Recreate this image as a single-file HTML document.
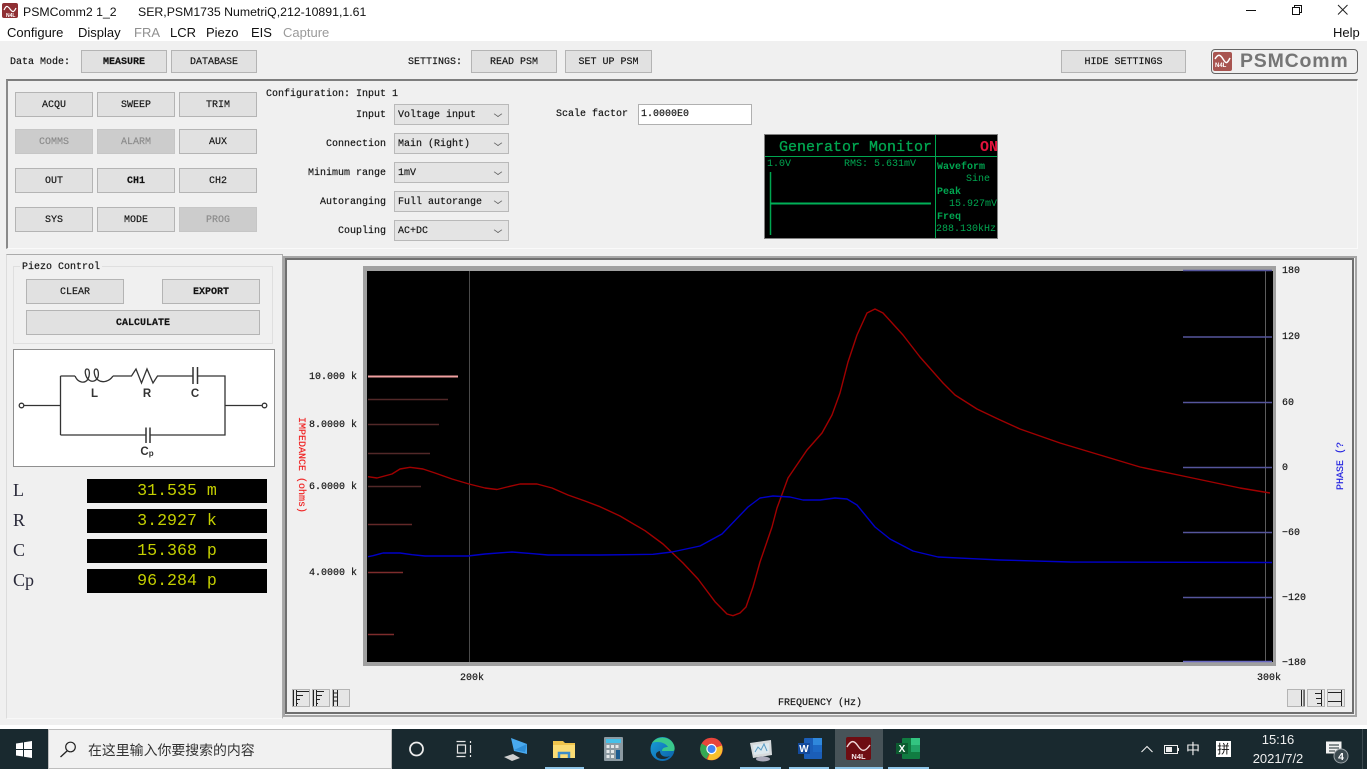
<!DOCTYPE html>
<html lang="zh"><head><meta charset="utf-8"><title>PSMComm2 1_2</title>
<style>
html,body{margin:0;padding:0;width:1367px;height:769px;overflow:hidden;background:#fff}
#p{position:relative;width:1367px;height:769px;overflow:hidden;font-family:"Liberation Mono",monospace;font-size:10px;color:#111}
.a{position:absolute}
.t{position:absolute;white-space:nowrap;line-height:12px;height:12px;margin-top:2px;-webkit-text-stroke:.15px #111}
.s{position:absolute;white-space:nowrap;font-family:"Liberation Sans","Noto Sans CJK SC",sans-serif;font-size:12.3px;line-height:16px;color:#111;margin-top:1px}
.m{font-size:13px}
.b{position:absolute;box-sizing:border-box;background:#e1e1e1;border:1px solid #b4b4b4;display:flex;align-items:center;justify-content:center;font-size:10px;color:#111;white-space:nowrap;padding-top:2px;-webkit-text-stroke:.15px currentColor}
.d{background:#ccc;color:#8a8a8a;border-color:#c6c6c6}
.w{font-weight:bold}
.sel{position:absolute;box-sizing:border-box;left:394px;width:115px;height:21px;background:#e4e4e4;border:1px solid #b9b9b9;font-size:10px;line-height:21px;padding-left:3px;white-space:nowrap;-webkit-text-stroke:.15px #111}
.sel:after{content:"";position:absolute;right:7px;top:6px;width:5px;height:5px;border-right:1px solid #666;border-bottom:1px solid #666;transform:scale(1,.7) rotate(45deg)}
.r{position:absolute;right:981px;white-space:nowrap;line-height:12px;margin-top:2px;-webkit-text-stroke:.15px #111}
.rd{position:absolute;left:87px;width:180px;height:24px;background:#000;color:#c4cf00;font-size:16.6px;line-height:24px;text-align:center;white-space:pre}
.lb{position:absolute;left:13px;font-family:"Liberation Serif",serif;font-size:18px;line-height:22px;color:#2a2a3a}
.g{position:absolute;color:#00a650;white-space:nowrap;line-height:12px;font-size:10px;margin-top:2px}
.yl{position:absolute;width:50px;text-align:right;left:307px;white-space:pre;line-height:12px;font-size:10px;margin-top:2px;-webkit-text-stroke:.15px #111}
.ph{position:absolute;left:1282px;white-space:nowrap;line-height:12px;font-size:10px;margin-top:2px;-webkit-text-stroke:.15px #111}
svg{position:absolute;left:0;top:0}
</style></head><body><div id="p">

<!-- window chrome -->
<div class="a" style="left:0;top:41px;width:1367px;height:684px;background:#f0f0f0"></div>
<div class="a" style="left:2px;top:3px;width:16px;height:15px;background:#8f2f33;border-radius:2px"></div>
<div class="s" style="left:23px;top:3px">PSMComm2 1_2</div>
<div class="s" style="left:138px;top:3px">SER,PSM1735 NumetriQ,212-10891,1.61</div>
<div class="s m" style="left:7px;top:24px">Configure</div>
<div class="s m" style="left:78px;top:24px">Display</div>
<div class="s m" style="left:134px;top:24px;color:#8f8f8f">FRA</div>
<div class="s m" style="left:170px;top:24px">LCR</div>
<div class="s m" style="left:206px;top:24px">Piezo</div>
<div class="s m" style="left:251px;top:24px">EIS</div>
<div class="s m" style="left:283px;top:24px;color:#9a9a9a">Capture</div>
<div class="s m" style="left:1333px;top:24px">Help</div>

<!-- top row -->
<div class="t" style="left:10px;top:55px">Data Mode:</div>
<div class="b w" style="left:81px;top:50px;width:86px;height:23px">MEASURE</div>
<div class="b" style="left:171px;top:50px;width:86px;height:23px">DATABASE</div>
<div class="t" style="left:408px;top:55px">SETTINGS:</div>
<div class="b" style="left:471px;top:50px;width:86px;height:23px">READ PSM</div>
<div class="b" style="left:565px;top:50px;width:87px;height:23px">SET UP PSM</div>
<div class="b" style="left:1061px;top:50px;width:125px;height:23px">HIDE SETTINGS</div>
<div class="a" style="left:1211px;top:49px;width:145px;height:23px;border:1px solid #666;border-radius:4px"></div>
<div class="a" style="left:1213px;top:52px;width:19px;height:19px;background:#a85450;border-radius:2px"></div>
<div class="a" style="left:1240px;top:49px;font:bold 19.5px/25px 'Liberation Sans',sans-serif;color:#757575;letter-spacing:.8px;white-space:nowrap">PSMComm</div>
<div class="a" style="left:1215px;top:63px;font:bold 6px/7px 'Liberation Sans',sans-serif;color:#fff">N4L</div>

<!-- settings panel -->
<div class="a" style="box-sizing:border-box;left:6px;top:79px;width:1352px;height:170px;border-top:2px solid #7d7d7d;border-left:2px solid #8a8a8a;border-right:1px solid #fafafa;border-bottom:1px solid #fafafa"></div>
<div class="b" style="left:15px;top:92px;width:78px;height:25px">ACQU</div>
<div class="b" style="left:97px;top:92px;width:78px;height:25px">SWEEP</div>
<div class="b" style="left:179px;top:92px;width:78px;height:25px">TRIM</div>
<div class="b d" style="left:15px;top:129px;width:78px;height:25px">COMMS</div>
<div class="b d" style="left:97px;top:129px;width:78px;height:25px">ALARM</div>
<div class="b" style="left:179px;top:129px;width:78px;height:25px">AUX</div>
<div class="b" style="left:15px;top:168px;width:78px;height:25px">OUT</div>
<div class="b w" style="left:97px;top:168px;width:78px;height:25px">CH1</div>
<div class="b" style="left:179px;top:168px;width:78px;height:25px">CH2</div>
<div class="b" style="left:15px;top:207px;width:78px;height:25px">SYS</div>
<div class="b" style="left:97px;top:207px;width:78px;height:25px">MODE</div>
<div class="b d" style="left:179px;top:207px;width:78px;height:25px">PROG</div>

<div class="t" style="left:266px;top:87px">Configuration: Input 1</div>
<div class="r" style="top:108px">Input</div>
<div class="r" style="top:137px">Connection</div>
<div class="r" style="top:166px">Minimum range</div>
<div class="r" style="top:195px">Autoranging</div>
<div class="r" style="top:224px">Coupling</div>
<div class="sel" style="top:104px">Voltage input</div>
<div class="sel" style="top:133px">Main (Right)</div>
<div class="sel" style="top:162px">1mV</div>
<div class="sel" style="top:191px">Full autorange</div>
<div class="sel" style="top:220px">AC+DC</div>
<div class="t" style="left:556px;top:107px">Scale factor</div>
<div class="a" style="box-sizing:border-box;left:638px;top:104px;width:114px;height:21px;background:#fff;border:1px solid #b0b0b0;line-height:20px;padding-left:2px;-webkit-text-stroke:.15px #111">1.0000E0</div>

<!-- generator monitor -->
<div class="a" style="box-sizing:border-box;left:764px;top:134px;width:234px;height:105px;background:#000;border:1px solid #808080"></div>
<div class="g" style="left:779px;top:139px;font-size:15px;line-height:14px;-webkit-text-stroke:.3px #00a650">Generator Monitor</div>
<div class="g" style="left:980px;top:139px;font-size:15px;line-height:14px;color:#e2123c;font-weight:bold">ON</div>
<div class="g" style="left:767px;top:157px">1.0V</div>
<div class="g" style="left:844px;top:157px">RMS: 5.631mV</div>
<div class="g" style="left:937px;top:160px;font-weight:bold">Waveform</div>
<div class="g" style="left:966px;top:172px">Sine</div>
<div class="g" style="left:937px;top:185px;font-weight:bold">Peak</div>
<div class="g" style="left:949px;top:197px">15.927mV</div>
<div class="g" style="left:937px;top:210px;font-weight:bold">Freq</div>
<div class="g" style="left:936px;top:222px">288.130kHz</div>

<!-- left panel -->
<div class="a" style="box-sizing:border-box;left:6px;top:254px;width:277px;height:465px;border-top:1px solid #ababab;border-left:1px solid #dcdcdc;border-right:1px solid #ababab;border-bottom:1px solid #f8f8f8"></div>
<div class="a" style="box-sizing:border-box;left:13px;top:266px;width:260px;height:78px;border:1px solid #dfdfdf"></div>
<div class="t" style="left:20px;top:260px;background:#f0f0f0;padding:0 2px">Piezo Control</div>
<div class="b" style="left:26px;top:279px;width:98px;height:25px">CLEAR</div>
<div class="b w" style="left:162px;top:279px;width:98px;height:25px">EXPORT</div>
<div class="b w" style="left:26px;top:310px;width:234px;height:25px">CALCULATE</div>
<div class="a" style="box-sizing:border-box;left:13px;top:349px;width:262px;height:118px;background:#fff;border:1px solid #8f8f8f"></div>
<div class="lb" style="top:479px">L</div>
<div class="lb" style="top:509px">R</div>
<div class="lb" style="top:539px">C</div>
<div class="lb" style="top:569px">Cp</div>
<div class="rd" style="top:479px">31.535 m</div>
<div class="rd" style="top:509px">3.2927 k</div>
<div class="rd" style="top:539px">15.368 p</div>
<div class="rd" style="top:569px">96.284 p</div>

<!-- chart panel -->
<div class="a" style="box-sizing:border-box;left:283px;top:256px;width:1074px;height:461px;border:2px solid #a6a6a6"></div>
<div class="a" style="box-sizing:border-box;left:285px;top:258px;width:1069px;height:456px;border:2px solid #6f6f6f"></div>
<div class="a" style="box-sizing:border-box;left:363px;top:266px;width:913px;height:400px;background:#000;border:4px solid #a0a0a0;border-top-width:5px;border-left-width:4px;border-right-width:3px"></div>
<div class="yl" style="top:370px">10.000 k</div>
<div class="yl" style="top:418px">8.0000 k</div>
<div class="yl" style="top:480px">6.0000 k</div>
<div class="yl" style="top:566px">4.0000 k</div>
<div class="ph" style="top:264px">180</div>
<div class="ph" style="top:330px">120</div>
<div class="ph" style="top:396px">60</div>
<div class="ph" style="top:461px">0</div>
<div class="ph" style="top:526px">−60</div>
<div class="ph" style="top:591px">−120</div>
<div class="ph" style="top:656px">−180</div>
<div class="t" style="left:460px;top:671px">200k</div>
<div class="t" style="left:1257px;top:671px">300k</div>
<div class="t" style="left:778px;top:696px">FREQUENCY (Hz)</div>
<div class="t" style="left:294px;top:415px;writing-mode:vertical-rl;height:auto;width:12px;color:#f02020;-webkit-text-stroke:.15px #f02020">IMPEDANCE (ohms)</div>

<svg width="1367" height="769" viewBox="0 0 1367 769">
<!-- logo wave -->
<path d="M1215 59c3-5 5-5 8 0s4 5 7-1" fill="none" stroke="#fff" stroke-width="1.5"/>
<path d="M4 10c2-4 3-5 6-1s4 3 6-1" fill="none" stroke="#fff" stroke-width="1.2"/>
<text x="6" y="17" font-family="Liberation Sans" font-size="5" font-weight="bold" fill="#fff">N4L</text>
<!-- window controls -->
<path d="M1246 10.500h10" stroke="#111" fill="none"/>
<path d="M1292.500 7.500h7v7h-7zM1294.500 7.500v-2h7v7h-2" stroke="#111" fill="none"/>
<path d="M1338 5l9.500 9.500M1347.500 5L1338 14.500" stroke="#222" fill="none"/>
<!-- monitor lines -->
<path d="M765 156.500H997M935.500 135V238" stroke="#00a650" fill="none"/>
<path d="M770.500 172V235" stroke="#00a650" stroke-width="1.500" fill="none"/>
<path d="M770 203.500H931" stroke="#00b058" stroke-width="2" fill="none"/>
<!-- circuit -->
<g fill="none" stroke="#333" stroke-width="1.300">
<circle cx="21.500" cy="405.500" r="2.300"/><circle cx="264.500" cy="405.500" r="2.300"/>
<path d="M24 405.500H60.500M60.500 376V435M60.500 376H75M113 376H131.500L136 369L141.500 383L147 369L153 383L157.500 376H192.500M197.500 376H225V435H150M145.500 435H60.500M225 405.500H262"/>
<path d="M75 376c3 7 10 8 13 3c2-4 2-10-1-10c-3 0-2 8 2 11c4 3 8 0 9-3c1-4 0-8-2-8c-3 0-2 8 2 11c4 3 11 2 15-4"/>
<path d="M193 367V384M197.500 367V384M146 427.500V443M150 427.500V443" stroke-width="1.500"/>
</g>
<g font-family="Liberation Sans" font-weight="bold" font-size="11.500" fill="#333" text-anchor="middle">
<text x="94.500" y="397">L</text><text x="147" y="397">R</text><text x="195" y="397">C</text>
<text x="147" y="455">C<tspan font-size="8" dy="1">p</tspan></text></g>
<!-- grid -->
<path d="M469.500 271V662" stroke="#4a4a4a" fill="none"/>
<path d="M1265.500 271V662" stroke="#5c5c5c" fill="none"/>
<g stroke-width="1.500" fill="none">
<path d="M368 399.500H448M368 424.500H439M368 453.500H430M368 486.500H421" stroke="#522828"/>
<path d="M368 524.500H412" stroke="#632828"/>
<path d="M368 572.500H403M368 634.500H394" stroke="#7d2c2c"/>
<path d="M1183 270.500H1272M1183 337H1272M1183 402.500H1272M1183 467.500H1272M1183 532.500H1272M1183 597.500H1272" stroke="#55559c"/>
<path d="M1183 661.500H1272" stroke="#6a6ac4"/>
</g>
<path d="M368 376.500H458" stroke="#f0a0a0" stroke-width="2" fill="none"/>
<!-- curves -->
<polyline fill="none" stroke="#a00000" stroke-width="1.400" stroke-linejoin="round" points="368,476.700 377,478 392,474 400,469 410,467.300 423,469 435,473 452,479 469,484 485,488 497,489.500 507,487 520,484 537,484 552,488 568,495 585,501 600,506.700 620,516 645,530.700 663,544 683,563 698,579 715,601.700 727,614 733,615.700 740,613 746,607 753,587 760,562 772,527 777,508 788,478 807,450 822,433 832,415 840,393 848,362 857,335 867,313 875,309 883,313 903,335 920,357 943,383 955,395 977,409 998,419 1020,429 1060,443 1100,455 1140,467 1183,476 1240,488 1270,493"/>
<polyline fill="none" stroke="#0000c8" stroke-width="1.400" stroke-linejoin="round" points="368,556.700 373,555.700 383,553 400,553 412,554.700 425,556 468,556 485,554 512,552 533,553.700 548,555 585,555 600,555 653,554.300 672,552 700,546 722,534 748,507 760,498 773,496 790,497 803,500 820,500 835,498 847,499 857,505 875,527 890,539 913,551 938,557 973,558.700 1000,560 1070,562 1272,562.500"/>
<text transform="translate(1343 490) rotate(-90)" font-family="Liberation Mono" font-size="10" fill="#2020e0" stroke="#2020e0" stroke-width=".15">PHASE (?</text>
<!-- zoom buttons -->
<g>
<rect x="292.500" y="689.500" width="17" height="17" fill="#e6e6e6" stroke="#b4b4b4"/><rect x="312.500" y="689.500" width="17" height="17" fill="#e6e6e6" stroke="#b4b4b4"/><rect x="332.500" y="689.500" width="17" height="17" fill="#e6e6e6" stroke="#b4b4b4"/>
<rect x="1287.500" y="689.500" width="17" height="17" fill="#e6e6e6" stroke="#b4b4b4"/><rect x="1307.500" y="689.500" width="17" height="17" fill="#e6e6e6" stroke="#b4b4b4"/><rect x="1327.500" y="689.500" width="17" height="17" fill="#e6e6e6" stroke="#b4b4b4"/>
<path d="M293.500 690V706M296.500 690V706M296 691.500H309M296 695.500H303M296 699.500H300M296 703.500H298M313.500 690V706M316.500 690V706M316 691.500H324M316 695.500H322M316 699.500H320M316 703.500H318M333.500 690V706M337.500 690V706M334 693H337M334 697H337M334 701H337M1301.500 690V706M1304 690V706M1321.500 690V706M1315 693.500H1321M1316 698.500H1321M1317 703.500H1321M1341.500 690V706M1328 692.500H1341M1328 701.500H1341" stroke="#222" fill="none"/>
</g>
</svg>

<!-- taskbar -->
<div class="a" style="left:0;top:729px;width:1367px;height:40px;background:#19292f"></div>
<div class="a" style="box-sizing:border-box;left:48px;top:729px;width:344px;height:40px;background:#f1f1f1;border:1px solid #bdbdbd"></div>
<div class="a" style="left:88px;top:741px;font:13.900px/18px 'Liberation Sans','Noto Sans CJK SC',sans-serif;color:#333;white-space:nowrap">在这里输入你要搜索的内容</div>
<div class="a" style="left:835px;top:729px;width:48px;height:40px;background:#475358"></div>
<div class="a" style="left:545px;top:767px;width:39px;height:2px;background:#8ec5e8"></div>
<div class="a" style="left:740px;top:767px;width:41px;height:2px;background:#8ec5e8"></div>
<div class="a" style="left:789px;top:767px;width:40px;height:2px;background:#8ec5e8"></div>
<div class="a" style="left:835px;top:767px;width:48px;height:2px;background:#8ec5e8"></div>
<div class="a" style="left:888px;top:767px;width:41px;height:2px;background:#8ec5e8"></div>
<svg width="1367" height="769" viewBox="0 0 1367 769">
<defs>
<linearGradient id="e" x1="0" y1="0" x2="1" y2="1"><stop offset="0" stop-color="#1a9fd8"/><stop offset="1" stop-color="#0b5fa8"/></linearGradient>
</defs>
<!-- start -->
<path d="M16 743.500l7-1V749h-7zM24 742.300l8-1.300V749h-8zM16 750h7v6.500l-7-1zM24 750h8v8l-8-1.300z" fill="#fff"/>
<!-- search -->
<circle cx="70.500" cy="747" r="4.800" fill="none" stroke="#222" stroke-width="1.200"/><path d="M67 751l-6.500 6" stroke="#222" stroke-width="1.300"/>
<!-- cortana -->
<circle cx="416.500" cy="749" r="6.500" fill="none" stroke="#ececec" stroke-width="1.800"/>
<!-- task view -->
<path d="M456.500 741.500h9M456.500 756.500h9M457.500 745v8h8v-8zM470.500 741v2M470.500 745v8M470.500 755v2" fill="none" stroke="#e6e6e6" stroke-width="1.200"/>
<!-- computer -->
<path d="M511 738l16 6v10l-13-3z" fill="#49a9ee"/><path d="M527 744l-2 8-11-2z" fill="#2f8fd8"/><path d="M504 757l9-3 7 4-8 3z" fill="#d0d0d0"/>
<!-- folder -->
<path d="M553 741h10l2 2h10v15h-22z" fill="#f0c44c"/><path d="M553 745h22v13h-22z" fill="#fbdc74"/><path d="M559 758v-5h10v5" fill="none" stroke="#3c8cc8" stroke-width="2.500"/>
<!-- calc -->
<rect x="604" y="737" width="19" height="24" rx="1" fill="#8c9aa2"/><rect x="606" y="739" width="15" height="4" fill="#46c0e8"/>
<path d="M606.500 745h3v3h-3zM611 745h3v3h-3zM615.500 745h3v3h-3zM606.500 750h3v3h-3zM611 750h3v3h-3zM606.500 755h3v3h-3zM611 755h3v3h-3z" fill="#e4e8ea"/><rect x="616" y="750" width="4" height="9" fill="#1d5c90"/>
<!-- edge -->
<circle cx="662.500" cy="749" r="12" fill="url(#e)"/><path d="M652 743c4-7 18-8 22 2c1 3 1 6-1 6h-11c0-3 3-4 6-4c-3-5-11-6-16-4z" fill="#39c88c"/><path d="M660 751c0 5 5 7 10 5c-3 3-8 4-12 2c-3-2-3-6 2-7z" fill="#1b2a30"/>
<!-- chrome -->
<circle cx="711.500" cy="749" r="11.300" fill="#e8453c"/><path d="M711.500 749l-10-5.500a11.300 11.300 0 0 0 5 15.500z" fill="#34a853"/><path d="M711.500 749l10.500-3.500a11.300 11.300 0 0 1-14.500 14z" fill="#f9c02d"/><circle cx="711.500" cy="749" r="5.200" fill="#fff"/><circle cx="711.500" cy="749" r="4" fill="#4285f4"/>
<!-- monitor -->
<path d="M750 743l21-3 1 15-19 3z" fill="#d6dadc"/><path d="M753 745l16-2v10l-15 2z" fill="#dce8ee"/><path d="M755 752l3-5 3 3 3-6 3 7" fill="none" stroke="#5a9cc4"/><ellipse cx="763" cy="759" rx="7" ry="2.500" fill="#aab"/>
<!-- word -->
<rect x="804" y="738" width="18" height="21" rx="1" fill="#1b5eb8"/><rect x="813" y="738" width="9" height="7" fill="#2f88dc"/><rect x="813" y="745" width="9" height="7" fill="#1d68c4"/><rect x="798" y="743" width="12" height="11" fill="#134a9c"/>
<text x="804" y="752" font-family="Liberation Sans" font-size="10" font-weight="bold" fill="#fff" text-anchor="middle">W</text>
<!-- n4l -->
<rect x="846" y="737" width="25" height="23" rx="2" fill="#6e0d12"/><path d="M847 747c4-7 7-7 11-1s7 6 12-1" fill="none" stroke="#f0d8d8" stroke-width="1.400"/>
<text x="858.500" y="759" font-family="Liberation Sans" font-size="7.500" font-weight="bold" fill="#f2e4e4" text-anchor="middle">N4L</text>
<!-- excel -->
<rect x="902" y="738" width="18" height="21" rx="1" fill="#107c41"/><rect x="911" y="738" width="9" height="7" fill="#33c481"/><rect x="911" y="745" width="9" height="7" fill="#21a366"/><rect x="896" y="743" width="12" height="11" fill="#0c5c30"/>
<text x="902" y="752" font-family="Liberation Sans" font-size="10" font-weight="bold" fill="#fff" text-anchor="middle">X</text>
<!-- tray -->
<path d="M1141.500 752l5.500-5.500 5.500 5.500" fill="none" stroke="#eee" stroke-width="1.100"/>
<rect x="1164.500" y="745.500" width="13" height="8" fill="none" stroke="#eee"/><rect x="1166" y="747" width="6" height="5" fill="#eee"/><rect x="1178" y="748" width="1" height="3" fill="#eee"/>
<text x="1193" y="754" font-family="Noto Sans CJK SC" font-size="14" fill="#f2f2f2" text-anchor="middle">中</text>
<rect x="1216" y="741" width="15" height="16" fill="#fff"/>
<text x="1223.500" y="753.500" font-family="Noto Sans CJK SC" font-size="12.500" fill="#111" text-anchor="middle">拼</text>
<g font-family="Liberation Sans" font-size="13" fill="#eee" text-anchor="middle"><text x="1278" y="744">15:16</text><text x="1278" y="763">2021/7/2</text></g>
<path d="M1326 741.500h15.500v12h-11l-4.500 0z" fill="#f2f2f2"/><path d="M1329 745h10M1329 748h10M1329 751h6" stroke="#19292f"/>
<circle cx="1341" cy="756" r="7" fill="#3c4a50" stroke="#9aa2a6"/>
<text x="1341" y="760" font-family="Liberation Sans" font-size="10.500" font-weight="bold" fill="#fff" text-anchor="middle">4</text>
<path d="M1362.500 729v40" stroke="#3c4a50"/>
</svg>
</div></body></html>
